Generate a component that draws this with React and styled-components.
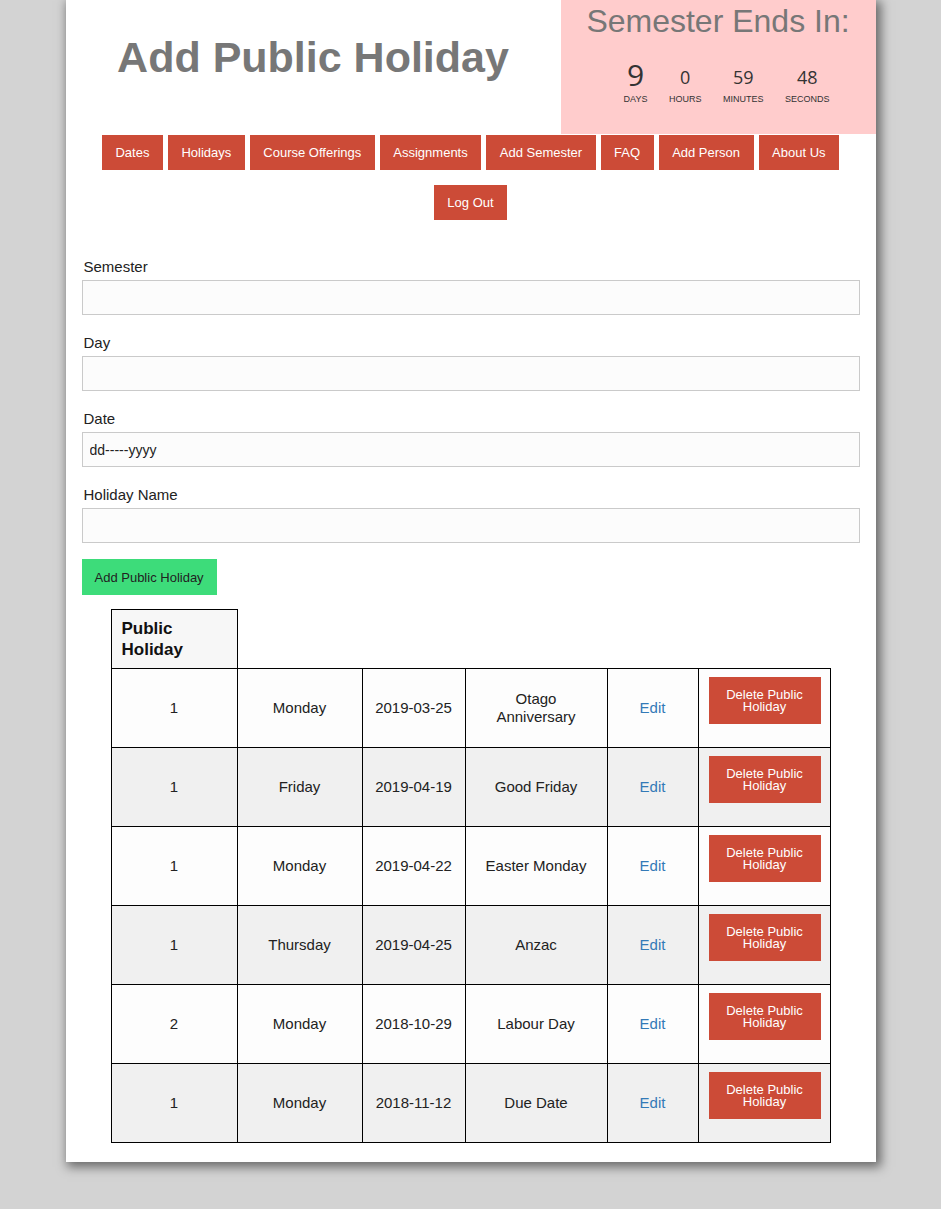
import React from 'react';
import styled, { createGlobalStyle } from 'styled-components';

const GlobalStyle = createGlobalStyle`
  html, body {
    margin: 0;
    min-height: 100%;
    background: #d3d3d3;
    font-family: "Liberation Sans", Arial, sans-serif;
  }
  body {
    padding-bottom: 48px;
  }
`;

const navLinks = ['Dates', 'Holidays', 'Course Offerings', 'Assignments', 'Add Semester', 'FAQ', 'Add Person', 'About Us', 'Log Out'];

const countdown = [
  { value: '9', label: 'DAYS', big: true },
  { value: '0', label: 'HOURS' },
  { value: '59', label: 'MINUTES' },
  { value: '48', label: 'SECONDS' },
];

const fields = [
  { label: 'Semester' },
  { label: 'Day' },
  { label: 'Date', placeholder: 'dd-----yyyy' },
  { label: 'Holiday Name' },
];

const holidays = [
  { sem: '1', day: 'Monday', date: '2019-03-25', name: 'Otago Anniversary' },
  { sem: '1', day: 'Friday', date: '2019-04-19', name: 'Good Friday' },
  { sem: '1', day: 'Monday', date: '2019-04-22', name: 'Easter Monday' },
  { sem: '1', day: 'Thursday', date: '2019-04-25', name: 'Anzac' },
  { sem: '2', day: 'Monday', date: '2018-10-29', name: 'Labour Day' },
  { sem: '1', day: 'Monday', date: '2018-11-12', name: 'Due Date' },
];

const colWidths = [126, 125, 103, 142, 91, 132];

const App = () => {
  return (
    <>
      <GlobalStyle />
      <Page>
        <Header>
          <TitleWrap>
            <Title>Add Public Holiday</Title>
          </TitleWrap>
          <Countdown>
            <CountdownTitle>Semester Ends In:</CountdownTitle>
            <CountdownRow>
              {countdown.map((c) => (
                <CountItem key={c.label}>
                  <CountValue $big={c.big}>{c.value}</CountValue>
                  <CountLabel>{c.label}</CountLabel>
                </CountItem>
              ))}
            </CountdownRow>
          </Countdown>
        </Header>

        <Nav>
          {navLinks.map((l) => (
            <NavButton key={l} href="#">{l}</NavButton>
          ))}
        </Nav>

        <Form>
          {fields.map((f) => (
            <Field key={f.label}>
              <Label>{f.label}</Label>
              <Input type="text" placeholder={f.placeholder} />
            </Field>
          ))}
          <SubmitButton type="button">Add Public Holiday</SubmitButton>
        </Form>

        <Table>
          <colgroup>
            {colWidths.map((w, i) => (
              <col key={i} style={{ width: w }} />
            ))}
          </colgroup>
          <thead>
            <tr>
              <HeadCell>Public Holiday</HeadCell>
            </tr>
          </thead>
          <tbody>
            {holidays.map((h, i) => (
              <Row key={i} $alt={i % 2 === 1}>
                <Cell>{h.sem}</Cell>
                <Cell>{h.day}</Cell>
                <Cell>{h.date}</Cell>
                <Cell>{h.name}</Cell>
                <Cell><EditLink href="#">Edit</EditLink></Cell>
                <ActionCell>
                  <DeleteButton type="button">Delete Public Holiday</DeleteButton>
                </ActionCell>
              </Row>
            ))}
          </tbody>
        </Table>
      </Page>
    </>
  );
};

const Page = styled.div`
  width: 810px;
  margin: 0 auto;
  background: #fff;
  box-shadow: 3px 3px 10px 2px rgba(0, 0, 0, 0.5);
  padding-bottom: 19px;
`;

const Header = styled.div`
  display: flex;
  height: 134px;
`;

const TitleWrap = styled.div`
  flex: 1;
  text-align: center;
`;

const Title = styled.h1`
  margin: 33px 0 0;
  font-size: 43px;
  line-height: 49px;
  font-weight: bold;
  color: #777;
`;

const Countdown = styled.div`
  width: 315px;
  background: #ffcccc;
  text-align: center;
`;

const CountdownTitle = styled.div`
  padding-top: 3px;
  font-size: 32px;
  line-height: 37px;
  color: #777;
`;

const CountdownRow = styled.div`
  display: flex;
  justify-content: center;
  align-items: flex-end;
  margin-top: 20px;
  padding-left: 17px;
`;

const CountItem = styled.div`
  display: flex;
  flex-direction: column;
  align-items: center;
  padding: 0 10.75px;
`;

const CountValue = styled.div`
  font-family: "Open Sans", sans-serif;
  color: #333;
  font-size: ${(p) => (p.$big ? '30px' : '18px')};
  line-height: ${(p) => (p.$big ? '30px' : '20px')};
  margin-bottom: ${(p) => (p.$big ? '3px' : '6px')};
`;

const CountLabel = styled.div`
  font-size: 9px;
  line-height: 12px;
  color: #333;
`;

const Nav = styled.nav`
  display: flex;
  flex-wrap: wrap;
  justify-content: center;
  column-gap: 5px;
  row-gap: 15px;
  padding: 1px 16px 0;
`;

const NavButton = styled.a`
  display: flex;
  align-items: center;
  height: 35px;
  padding: 0 13.5px;
  background: #cc4b37;
  color: #fff;
  font-size: 13px;
  text-decoration: none;
`;

const Form = styled.form`
  padding: 38px 16px 0;
`;

const Field = styled.div`
  margin-bottom: 19px;
`;

const Label = styled.label`
  display: block;
  padding-left: 2px;
  font-size: 15px;
  line-height: 18px;
  color: #222;
  margin-bottom: 4px;
`;

const Input = styled.input`
  display: block;
  box-sizing: border-box;
  width: 100%;
  height: 35px;
  border: 1px solid #cacaca;
  background: #fcfcfc;
  padding: 0 7px;
  font-family: inherit;
  font-size: 14px;
  color: #222;
  outline: none;

  &::placeholder {
    color: #222;
  }
`;

const SubmitButton = styled.button`
  display: block;
  height: 36px;
  margin-top: -3px;
  padding: 0 13px;
  border: none;
  background: #3ddc7a;
  color: #222;
  font-family: inherit;
  font-size: 13px;
  cursor: pointer;
`;

const Table = styled.table`
  width: 720px;
  margin: 14px auto 0;
  table-layout: fixed;
  border-collapse: collapse;
  font-size: 15px;
  color: #222;
`;

const HeadCell = styled.th`
  height: 58px;
  padding: 0 10px;
  border: 1px solid #000;
  background: #f7f7f7;
  text-align: left;
  font-size: 17px;
  line-height: 21px;
  color: #111;
`;

const Row = styled.tr`
  background: ${(p) => (p.$alt ? '#f0f0f0' : '#fdfdfd')};
`;

const Cell = styled.td`
  height: 78px;
  box-sizing: border-box;
  padding: 8px 10px;
  border: 1px solid #000;
  text-align: center;
  vertical-align: middle;
  line-height: 18px;
`;

const ActionCell = styled(Cell)`
  vertical-align: top;
  padding: 8px 9px 23px 10px;
`;

const EditLink = styled.a`
  color: #337ab7;
  text-decoration: none;
`;

const DeleteButton = styled.button`
  display: block;
  width: 100%;
  height: 47px;
  padding: 0 12px;
  border: none;
  background: #cc4b37;
  color: #fff;
  font-family: inherit;
  font-size: 13px;
  line-height: 12px;
  cursor: pointer;
`;

export default App;
